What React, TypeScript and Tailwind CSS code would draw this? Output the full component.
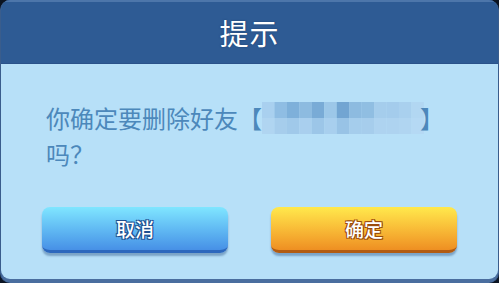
import React from 'react'

// blurred-out friend name, drawn as pixel blocks
const blurCells = [
    ['#a9d0ef', '#8fbde3', '#7eb0da', '#8dbbe0', '#79abd6', '#9cc7e8', '#72a5d2', '#8dbbe0', '#90bee2', '#a5cdec', '#a4ccec', '#a9d0ee', '#b2d7f2'],
    ['#b0d5f1', '#a6cdec', '#a0c9ea', '#a9cfee', '#9cc6e8', '#a8cfee', '#98c3e6', '#a5cdec', '#a6cdec', '#aed3f0', '#aed3f0', '#b0d5f1', '#b5d9f4'],
]

const BlurredName = () => (
    <svg width="162" height="32" viewBox="0 0 162 32" className="inline-block align-middle">
        {blurCells.map((row, r) =>
            row.map((c, i) => (
                <rect key={`${r}-${i}`} x={i * 12.45} y={r * 16} width="12.5" height="16" fill={c} />
            ))
        )}
    </svg>
)

export default function App() {
    return (
        <div className="w-[499px] h-[283px] bg-[#0b1422] font-['Noto_Sans_CJK_SC','Noto_Sans',sans-serif]">
            <div className="w-full h-full rounded-[10px] overflow-hidden flex flex-col border-x border-[#3a5d8c] bg-[#4a6e9f] pb-[4px]">
                {/* header */}
                <div className="h-[64px] shrink-0 bg-[#2e5b94] border-t-[2px] border-[#4d76aa] border-b border-b-[#2a528a] flex items-center justify-center">
                    <span className="text-white text-[29px] leading-none tracking-[1px] [text-shadow:0_0_2px_#1b3f6e]">提示</span>
                </div>

                {/* body */}
                <div className="flex-1 bg-[#b7e0f8] rounded-b-[9px] flex flex-col">
                    <div className="pl-[45px] pt-[36px] text-[24px] leading-[36px] text-[#4c88bb]">
                        <div className="flex items-center">
                            <span>你确定要删除好友【</span>
                            <BlurredName />
                            <span className="-ml-[4px]">】</span>
                        </div>
                        <div>吗？</div>
                    </div>

                    <div className="flex justify-between px-[41px] mt-[35px]">
                        <button className="w-[186px] h-[46px] rounded-[8px] bg-gradient-to-b from-[#80e6ff] to-[#4790e6] border-b-[3px] border-[#2d68bd] shadow-[0_3px_2px_rgba(50,90,140,0.45)] flex items-center justify-center">
                            <span className="text-white text-[19px] font-medium leading-none [text-shadow:1px_1px_0_#1e4f90,-1px_-1px_0_#1e4f90,1px_-1px_0_#1e4f90,-1px_1px_0_#1e4f90]">取消</span>
                        </button>
                        <button className="w-[186px] h-[46px] rounded-[8px] bg-gradient-to-b from-[#ffe94c] to-[#ee8f22] border-b-[3px] border-[#b25c12] shadow-[0_3px_2px_rgba(50,90,140,0.45)] flex items-center justify-center">
                            <span className="text-white text-[19px] font-medium leading-none [text-shadow:1px_1px_0_#9a4a0c,-1px_-1px_0_#9a4a0c,1px_-1px_0_#9a4a0c,-1px_1px_0_#9a4a0c]">确定</span>
                        </button>
                    </div>
                </div>
            </div>
        </div>
    )
}
